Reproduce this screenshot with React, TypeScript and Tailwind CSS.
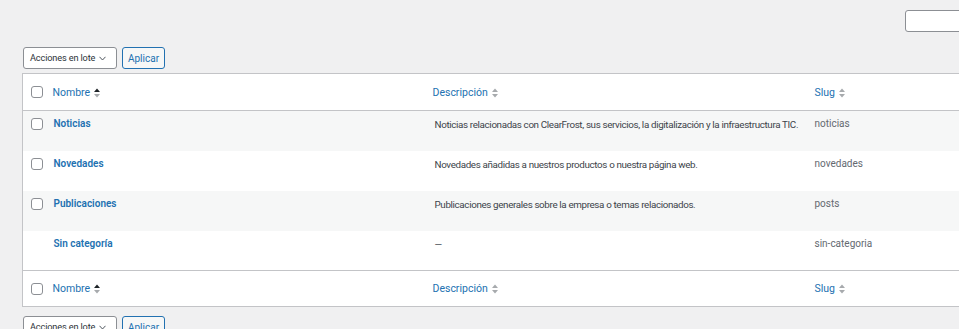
type Term = { name: string; desc: string; slug: string; cb: boolean };

const terms: Term[] = [
  {
    name: "Noticias",
    desc: "Noticias relacionadas con ClearFrost, sus servicios, la digitalización y la infraestructura TIC.",
    slug: "noticias",
    cb: true,
  },
  {
    name: "Novedades",
    desc: "Novedades añadidas a nuestros productos o nuestra página web.",
    slug: "novedades",
    cb: true,
  },
  {
    name: "Publicaciones",
    desc: "Publicaciones generales sobre la empresa o temas relacionados.",
    slug: "posts",
    cb: true,
  },
  { name: "Sin categoría", desc: "—", slug: "sin-categoria", cb: false },
];

function SortIcon({ active }: { active?: boolean }) {
  return (
    <svg width="6" height="10" viewBox="0 0 6 10" className="ml-[4px] inline-block">
      <polygon points="0,4 3,0.5 6,4" fill={active ? "#1d2327" : "#a7aaad"} />
      <polygon points="0,6 3,9.5 6,6" fill="#a7aaad" />
    </svg>
  );
}

function Checkbox() {
  return <span className="block h-[12px] w-[12px] rounded-[3px] border border-[#8c8f94] bg-white" />;
}

function BulkActions() {
  return (
    <div className="ml-[1px] flex items-center gap-[5px]">
      <div className="flex h-[22px] w-[94px] items-center gap-[4px] whitespace-nowrap rounded-[3px] border border-[#8c8f94] bg-white pl-[6px] text-[9.2px] tracking-[-0.15px] text-[#2c3338]">
        <span>Acciones en lote</span>
        <svg width="7" height="5" viewBox="0 0 7 5">
          <polyline points="0.5,0.8 3.5,4 6.5,0.8" fill="none" stroke="#50575e" strokeWidth="1" />
        </svg>
      </div>
      <button className="h-[22px] w-[43px] rounded-[3px] border border-[#2271b1] bg-[#f6f7f7] text-[10px] text-[#2271b1]">
        Aplicar
      </button>
    </div>
  );
}

function HeadRow({ footer }: { footer?: boolean }) {
  return (
    <tr className={footer ? "h-[36px] border-t border-[#c3c4c7]" : "h-[37px] border-b border-[#c3c4c7]"}>
      <td className="pl-[8px] align-middle">
        <Checkbox />
      </td>
      <td className="pl-[7px] pt-[1px] align-middle text-[#2271b1]">
        <span className="inline-flex items-center">
          Nombre
          <SortIcon active />
        </span>
      </td>
      <td className="pl-[8px] pt-[1px] align-middle text-[#2271b1]">
        <span className="inline-flex items-center">
          Descripción
          <SortIcon />
        </span>
      </td>
      <td className="pl-[8px] pt-[1px] align-middle text-[#2271b1]">
        <span className="inline-flex items-center">
          Slug
          <SortIcon />
        </span>
      </td>
      <td />
    </tr>
  );
}

export default function App() {
  return (
    <div className="h-[329px] w-[959px] overflow-hidden bg-[#f0f0f1] font-['Roboto',sans-serif] text-[10.5px]">
      <div className="w-[1080px] pl-[22px] pr-[20px]">
        <div className="flex justify-end pt-[10px]">
          <input className="h-[22px] w-[155px] rounded-[3px] border border-[#8c8f94] bg-white" />
        </div>

        <div className="mt-[15px]">
          <BulkActions />
        </div>

        <table className="mt-[4px] w-full table-fixed border-collapse border border-[#c3c4c7] bg-white">
          <colgroup>
            <col className="w-[23px]" />
            <col className="w-[379px]" />
            <col className="w-[382px]" />
            <col className="w-[160px]" />
            <col />
          </colgroup>
          <thead>
            <HeadRow />
          </thead>
          <tbody>
            {terms.map((t, i) => (
              <tr key={t.slug} className={`h-[40px] ${i % 2 === 0 ? "bg-[#f6f7f7]" : "bg-white"}`}>
                <td className="pl-[8px] pt-[7px] align-top">{t.cb && <Checkbox />}</td>
                <td className="pl-[8px] pt-[5px] align-top text-[10px] font-semibold text-[#2271b1]">{t.name}</td>
                <td className="whitespace-nowrap pl-[10px] pt-[7px] align-top text-[9.8px] tracking-[-0.35px] text-[#3c434a]">
                  {t.desc}
                </td>
                <td className="pl-[8px] pt-[5px] align-top text-[10px] text-[#646970]">{t.slug}</td>
                <td />
              </tr>
            ))}
          </tbody>
          <tfoot>
            <HeadRow footer />
          </tfoot>
        </table>

        <div className="mt-[9px]">
          <BulkActions />
        </div>
      </div>
    </div>
  );
}
